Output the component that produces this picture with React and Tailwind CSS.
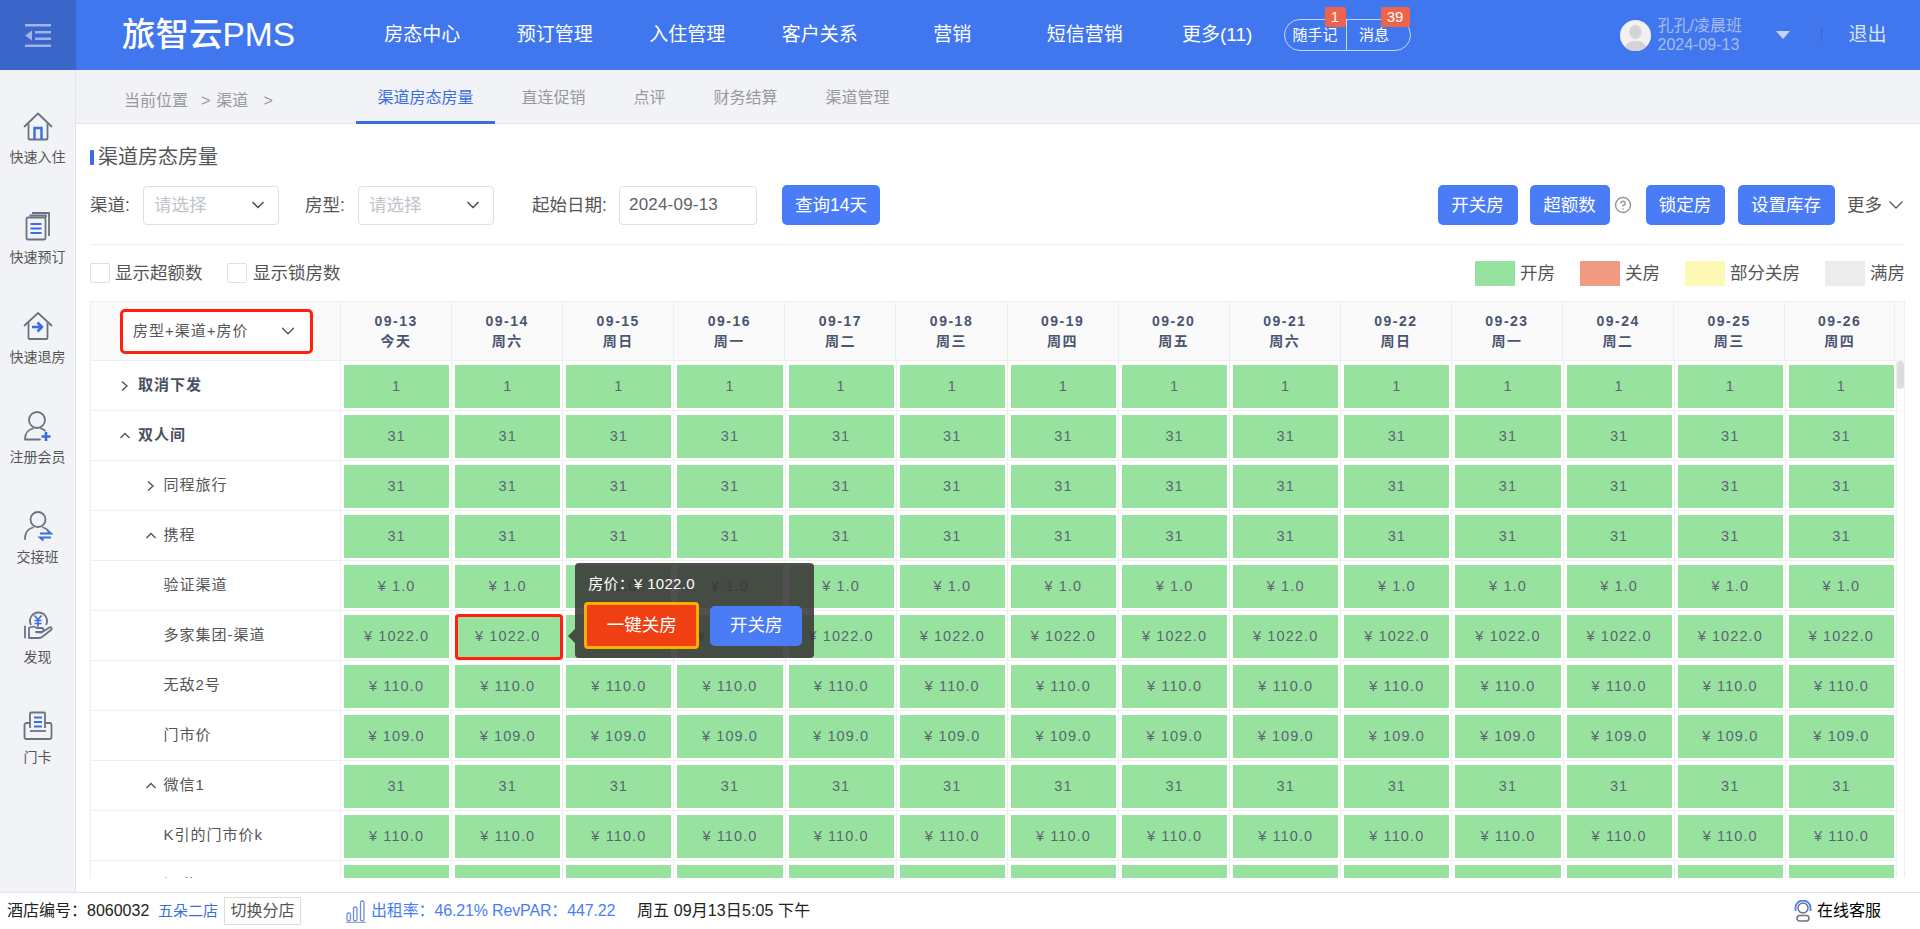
import React from "react";
import { ChevronDown, CircleHelp } from "lucide-react";

const navItems = ["房态中心", "预订管理", "入住管理", "客户关系", "营销", "短信营销", "更多(11)"];
const tabs = ["直连促销", "点评", "财务结算", "渠道管理"];
const days = [
  ["09-13", "今天"],
  ["09-14", "周六"],
  ["09-15", "周日"],
  ["09-16", "周一"],
  ["09-17", "周二"],
  ["09-18", "周三"],
  ["09-19", "周四"],
  ["09-20", "周五"],
  ["09-21", "周六"],
  ["09-22", "周日"],
  ["09-23", "周一"],
  ["09-24", "周二"],
  ["09-25", "周三"],
  ["09-26", "周四"],
];
const rows = [
  { label: "取消下发", level: 0, open: false, value: "1" },
  { label: "双人间", level: 0, open: true, value: "31" },
  { label: "同程旅行", level: 1, open: false, value: "31" },
  { label: "携程", level: 1, open: true, value: "31" },
  { label: "验证渠道", level: 2, value: "¥ 1.0" },
  { label: "多家集团-渠道", level: 2, value: "¥ 1022.0", popover: true },
  { label: "无敌2号", level: 2, value: "¥ 110.0" },
  { label: "门市价", level: 2, value: "¥ 109.0" },
  { label: "微信1", level: 1, open: true, value: "31" },
  { label: "K引的门市价k", level: 2, value: "¥ 110.0" },
  { label: "渠道价", level: 2, value: "¥ 110.0" },
];

const HomeIcon = () => (
  <svg width="30" height="30" viewBox="0 0 30 30" fill="none" stroke="#6b7280" strokeWidth="1.8">
    <path d="M1.5 15.5 15 2.5l13.5 13" strokeLinejoin="round" strokeLinecap="round" />
    <path d="M5.5 12.5V27.5a1 1 0 0 0 1 1h17a1 1 0 0 0 1-1V12.5" />
    <path d="M11.5 28V17h7v11" stroke="#3a6ee0" strokeWidth="2.4" />
  </svg>
);

const BookIcon = () => (
  <svg width="30" height="30" viewBox="0 0 30 30" fill="none" stroke="#6b7280" strokeWidth="1.8">
    <path d="M9 2h17v23" />
    <path d="M6.5 4.5h16.5v2" />
    <rect x="3.5" y="6.5" width="19" height="22" rx="1.5" />
    <path d="M7.5 13h11M7.5 17.5h11M7.5 22h11" stroke="#3a6ee0" strokeWidth="2.2" />
  </svg>
);

const CheckoutIcon = () => (
  <svg width="30" height="30" viewBox="0 0 30 30" fill="none" stroke="#6b7280" strokeWidth="1.8">
    <path d="M1.5 14.5 15 2l13.5 12.5" strokeLinejoin="round" strokeLinecap="round" />
    <path d="M5.5 11.5V27a1 1 0 0 0 1 1h17a1 1 0 0 0 1-1V11.5" />
    <path d="M9 16h9M14.5 11.5 19 16l-4.5 4.5" stroke="#3a6ee0" strokeWidth="2.6" strokeLinejoin="round" />
  </svg>
);

const MemberIcon = () => (
  <svg width="30" height="30" viewBox="0 0 30 30" fill="none" stroke="#6b7280" strokeWidth="1.8">
    <circle cx="14" cy="9" r="8" />
    <path d="M2 28c0-6 4-9.500 8-10.500M18 17.500c1.500.5 3 1.200 4 2.200M2 28.500h15" strokeLinecap="round" />
    <path d="M23 21v9M18.500 25.500h9" stroke="#3a6ee0" strokeWidth="2.6" />
  </svg>
);

const ShiftIcon = () => (
  <svg width="30" height="30" viewBox="0 0 30 30" fill="none" stroke="#6b7280" strokeWidth="1.8">
    <circle cx="15" cy="8.500" r="7.500" />
    <path d="M2 28c0-7 4-10.500 8-11.500M20 16.500c1.500.4 3 1.200 4.500 2.500" strokeLinecap="round" />
    <path d="M17 22.500h11l-3.500-3M28 26.500H17l3.500 3" stroke="#3a6ee0" strokeWidth="2" />
  </svg>
);

const DiscoverIcon = () => (
  <svg width="30" height="30" viewBox="0 0 30 30" fill="none" stroke="#6b7280" strokeWidth="1.8">
    <path d="M8 14A8.500 8.500 0 1 1 23 14" />
    <path d="M11.500 4.500 15 8.500l3.500-4M15 8.500v7M11.500 9.500h7M11.500 12.500h7" stroke="#3a6ee0" strokeWidth="1.7" />
    <path d="M2 15.500v11" strokeLinecap="round" />
    <path d="M6 17c3-2 6-1.500 8 0h4.500a2 2 0 0 1 0 4H13l5.500.5 8-5c1.800-1 3 1.200 1.500 2.500l-9 7c-1 .8-2 1-3.500 1H6z" strokeLinejoin="round" />
  </svg>
);

const DoorCardIcon = () => (
  <svg width="30" height="30" viewBox="0 0 30 30" fill="none" stroke="#6b7280" strokeWidth="1.8">
    <path d="M7 17V2.500a1 1 0 0 1 1-1h13a1 1 0 0 1 1 1V17" />
    <path d="M7 12H3.500a2 2 0 0 0-2 2v12a2 2 0 0 0 2 2h23a2 2 0 0 0 2-2V14a2 2 0 0 0-2-2H22" />
    <path d="M7 20h16" />
    <path d="M11 6.500h8M11 11h8M11 15.500h8" stroke="#3a6ee0" strokeWidth="2" />
  </svg>
);

const sideItems = [
  { label: "快速入住", Icon: HomeIcon },
  { label: "快速预订", Icon: BookIcon },
  { label: "快速退房", Icon: CheckoutIcon },
  { label: "注册会员", Icon: MemberIcon },
  { label: "交接班", Icon: ShiftIcon },
  { label: "发现", Icon: DiscoverIcon },
  { label: "门卡", Icon: DoorCardIcon },
];

const Header = () => (
  <header className="flex h-[70px] shrink-0 items-center bg-[#4177ee] text-white">
    <div className="flex h-full w-[76px] items-center justify-center bg-[#3a66c9]">
      <svg width="26" height="23" viewBox="0 0 26 23" fill="#9fb4e8">
        <rect x="0" y="0" width="26" height="2.500" />
        <rect x="10" y="7" width="16" height="2.500" />
        <rect x="10" y="13.500" width="16" height="2.500" />
        <rect x="0" y="20.500" width="26" height="2.500" />
        <path d="M0 11.500 7 6.500v10z" />
      </svg>
    </div>
    <div className="w-[280px] pl-[46px] text-[33.500px] font-medium leading-none">旅智云PMS</div>
    <nav className="flex">
      {navItems.map((item) => (
        <div key={item} className="w-[132.500px] text-center text-[19px]">
          {item}
        </div>
      ))}
    </nav>
    <div className="relative flex h-[32px] w-[127px] items-center rounded-full border border-[#c5d4f7] text-[15px]">
      <div className="flex h-full w-[62px] items-center justify-center border-r border-[#c5d4f7]">随手记</div>
      <div className="flex flex-1 items-center justify-center pr-[8px]">消息</div>
      <span className="absolute left-[40px] top-[-13px] flex h-[20px] w-[21px] items-center justify-center rounded-[2px] bg-[#f0634b] text-[15px]">
        1
      </span>
      <span className="absolute left-[96px] top-[-13px] flex h-[20px] w-[29px] items-center justify-center rounded-[2px] bg-[#f0634b] text-[15px]">
        39
      </span>
    </div>
    <div className="ml-[209px] h-[31px] w-[31px] overflow-hidden rounded-full bg-[#f1f1f1]">
      <svg width="31" height="31" viewBox="0 0 31 31" fill="#d3d3d6">
        <ellipse cx="15.500" cy="12" rx="6" ry="7" />
        <path d="M4 31c0-7 5-10 11.500-10S27 24 27 31z" />
      </svg>
    </div>
    <div className="ml-[7px] w-[118px] text-[16px] leading-[19px] text-[#a6bcf0]">
      <div>孔孔/凌晨班</div>
      <div>2024-09-13</div>
    </div>
    <div className="h-0 w-0 border-x-[7px] border-t-[8px] border-x-transparent border-t-[#c6d4f5]" />
    <div className="ml-[31px] h-[14px] w-px bg-[#3a66c9]" />
    <div className="ml-[27px] text-[19px] text-[#dbe4fa]">退出</div>
  </header>
);

const Sidebar = () => (
  <aside className="w-[76px] shrink-0 border-r border-[#e3e4ea] bg-[#f2f3f7] pt-[41px]">
    {sideItems.map(({ label, Icon }) => (
      <div key={label} className="flex h-[100px] flex-col items-center">
        <Icon />
        <div className="mt-[6px] text-[14px] leading-[20px] text-[#555555]">{label}</div>
      </div>
    ))}
  </aside>
);

const SubNav = () => (
  <div className="flex h-[54px] shrink-0 border-b border-[#e3e4e8] bg-[#f2f3f7] text-[16px] text-[#999999]">
    <div className="flex w-[301.500px] items-center pl-[48px] pt-[8px]">
      <span>当前位置</span>
      <span className="ml-[13px]">&gt;</span>
      <span className="ml-[6px]">渠道</span>
      <span className="ml-[15px]">&gt;</span>
    </div>
    <div className="flex items-center gap-[48px] pt-[2px]">
      <div className="relative flex h-full items-center text-[#3a6ee0]">
        渠道房态房量
        <span className="absolute -bottom-px -left-[21.500px] -right-[21.500px] h-[3px] bg-[#3a6ee0]" />
      </div>
      {tabs.map((tab) => (
        <div key={tab}>{tab}</div>
      ))}
    </div>
  </div>
);

const Select = ({ width }) => (
  <div className={`flex h-[39px] items-center justify-between rounded-[4px] border border-[#dcdfe6] pl-[10px] pr-[10px] ${width}`}>
    <span className="text-[17.500px] text-[#c0c4cc]">请选择</span>
    <ChevronDown size={20} strokeWidth={2} color="#555555" />
  </div>
);

const BlueButton = ({ children, className }) => (
  <button className={`flex h-[40px] items-center justify-center rounded-[5px] bg-[#4a7df5] text-[17.500px] text-white ${className}`}>
    {children}
  </button>
);

const Toolbar = () => (
  <div className="mt-[16px] flex h-[40px] items-center text-[17.500px] text-[#555555]">
    <span className="w-[53px]">渠道:</span>
    <Select width="w-[136px]" />
    <span className="ml-[26px] w-[53px]">房型:</span>
    <Select width="w-[136px]" />
    <span className="ml-[38px] w-[87px]">起始日期:</span>
    <div className="flex h-[39px] w-[137.500px] items-center rounded-[4px] border border-[#dcdfe6] pl-[9px] text-[17px] tracking-[0.200px] text-[#606266]">
      2024-09-13
    </div>
    <BlueButton className="ml-[25.500px] w-[98px]">查询14天</BlueButton>
    <div className="-mr-[3px] ml-auto flex items-center">
      <BlueButton className="w-[80px]">开关房</BlueButton>
      <BlueButton className="ml-[12px] w-[80px]">超额数</BlueButton>
      <CircleHelp size={18} color="#999999" className="ml-[4px]" />
      <BlueButton className="ml-[14px] w-[79px]">锁定房</BlueButton>
      <BlueButton className="ml-[13px] w-[97px]">设置库存</BlueButton>
      <span className="ml-[12.500px]">更多</span>
      <ChevronDown size={24} strokeWidth={1.300} className="ml-[2px]" />
    </div>
  </div>
);

const Legend = ({ color, label, className }) => (
  <div className={`flex items-center ${className}`}>
    <span className={`h-[25px] w-[40px] ${color}`} />
    <span className="ml-[5px]">{label}</span>
  </div>
);

const Filters = () => (
  <div className="flex h-[56px] items-center text-[17.500px] text-[#555555]">
    <span className="h-[20px] w-[20px] rounded-[2px] border border-[#dcdfe6]" />
    <span className="ml-[5px] w-[112px]">显示超额数</span>
    <span className="h-[20px] w-[20px] rounded-[2px] border border-[#dcdfe6]" />
    <span className="ml-[6px]">显示锁房数</span>
    <div className="ml-auto flex items-center">
      <Legend color="bg-[#98e2a0]" label="开房" />
      <Legend color="bg-[#f09a82]" label="关房" className="ml-[25px]" />
      <Legend color="bg-[#fdf9b5]" label="部分关房" className="ml-[25px]" />
      <Legend color="bg-[#ececec]" label="满房" className="ml-[25px]" />
    </div>
  </div>
);

const Popover = () => (
  <>
    <div className="absolute left-[3px] top-[3px] z-10 h-[46px] w-[108px] rounded-[4px] border-[3.500px] border-[#ff2010]" />
    <div className="absolute left-[116px] top-[18px] z-20 h-0 w-0 border-y-[7px] border-r-[7px] border-y-transparent border-r-[#444c44]" />
    <div className="absolute left-[123px] top-[-48px] z-20 h-[95px] w-[239px] rounded-[4px] bg-[rgba(53,49,52,0.85)]">
      <div className="pl-[13px] pt-[11px] text-[15px] leading-[20px] tracking-[0.300px] text-white">房价：¥ 1022.0</div>
      <div className="mt-[8px] flex items-center pl-[9px]">
        <button className="h-[47px] w-[115px] rounded-[4px] border-[3.500px] border-[#fbb000] bg-[#ef3f13] text-[17.500px] text-white">
          一键关房
        </button>
        <button className="ml-[11px] h-[40px] w-[92px] rounded-[5px] bg-[#4a7df5] text-[17.500px] text-white">开关房</button>
      </div>
    </div>
  </>
);

const TreeArrow = ({ open }) => (
  <svg width="10" height="10" viewBox="0 0 10 10" fill="none" stroke="#555555" strokeWidth="1.400">
    <polyline points={open ? "0.500,7 5,2.500 9.500,7" : "2,0.500 7,5 2,9.500"} />
  </svg>
);

const LeftCell = ({ row }) => {
  const indent = row.level === 0 ? "pl-[29px]" : "pl-[54.500px]";
  const weight = row.level === 0 ? "font-bold text-[#4a5060]" : "text-[#555555]";
  return (
    <div className={`flex h-[50px] items-center border-b border-r border-[#eeeeee] text-[15px] tracking-[1px] ${indent} ${weight}`}>
      <span className="flex w-[18px] shrink-0 items-center">
        {row.open !== undefined && <TreeArrow open={row.open} />}
      </span>
      {row.label}
    </div>
  );
};

const RoomTable = () => (
  <div className="relative w-[1815px] border-l border-r border-t border-[#eeeeee]">
    <div className="grid h-[59px] grid-cols-[250px_repeat(13,111.100px)_110px_10px] bg-[#fafafa]">
      <div className="flex items-center border-b border-r border-[#eeeeee] pl-[29px]">
        <div className="flex h-[45px] w-[193px] items-center justify-between rounded-[5px] border-[3.500px] border-[#ff2010] bg-white pl-[10px] pr-[11px] text-[15px] tracking-[1px] text-[#555555]">
          房型+渠道+房价
          <ChevronDown size={22} strokeWidth={1.500} />
        </div>
      </div>
      {days.map(([date, day]) => (
        <div
          key={date}
          className="flex flex-col items-center justify-center border-b border-r border-[#eeeeee] text-[14px] font-bold leading-[20px] tracking-[1.500px] text-[#4a5570]"
        >
          <span>{date}</span>
          <span>{day}</span>
        </div>
      ))}
      <div className="border-b border-[#eeeeee]" />
    </div>
    <div className="relative h-[517px] overflow-hidden">
      {rows.map((row) => (
        <div key={row.label} className="grid grid-cols-[250px_repeat(14,111.150px)]">
          <LeftCell row={row} />
          {days.map(([date], i) => (
            <div key={date} className="relative h-[50px] border-b border-r border-[#eeeeee] pb-[2px] pl-[3px] pr-[2px] pt-[4px]">
              <div className="flex h-full items-center justify-center bg-[#98e2a0] text-[14.500px] tracking-[1.100px] text-[#5b6670]">
                {row.value}
              </div>
              {row.popover && i === 1 && <Popover />}
            </div>
          ))}
        </div>
      ))}
      <span className="absolute right-0 top-0 h-[28px] w-[7px] rounded-full bg-[#dcdcdc]" />
    </div>
  </div>
);

const Footer = () => (
  <footer className="flex h-[37px] shrink-0 items-center border-t border-[#e3e4ea] bg-white pl-[7px] text-[16px] text-[#222222]">
    <span className="w-[151px]">酒店编号：8060032</span>
    <span className="text-[15px] text-[#3a6ee0]">五朵二店</span>
    <span className="ml-[6px] flex h-[28px] w-[77px] items-center justify-center border border-[#dddddd] text-[#555555]">
      切换分店
    </span>
    <svg width="20" height="23" viewBox="0 0 20 23" fill="none" stroke="#6d8fe0" strokeWidth="1.300" className="ml-[45px]">
      <rect x="1" y="13" width="3.500" height="8" rx="1.700" />
      <rect x="7.500" y="7" width="3.500" height="14" rx="1.700" />
      <rect x="14.500" y="1" width="3.500" height="20" rx="1.700" />
      <path d="M0 22.500h20" stroke="#9aa3b5" />
    </svg>
    <span className="ml-[5px] w-[266px] tracking-[-0.150px] text-[#4a7df5]">出租率：46.21% RevPAR：447.22</span>
    <span className="tracking-[0.100px]">周五 09月13日5:05 下午</span>
    <svg width="18" height="22" viewBox="0 0 18 22" fill="none" stroke="#6b7280" strokeWidth="1.500" className="ml-auto">
      <circle cx="9" cy="8" r="5" />
      <rect x="3" y="15.500" width="12" height="5.500" rx="2.700" />
      <path d="M1.500 11V7.500a7.500 7 0 0 1 15 0V11" stroke="#4a7df5" strokeWidth="1.800" />
    </svg>
    <span className="ml-[5px] mr-[39px] text-black">在线客服</span>
  </footer>
);

const App = () => {
  return (
    <div className="flex h-[929px] w-full flex-col overflow-hidden bg-white font-['Liberation_Sans','Noto_Sans_CJK_SC',sans-serif]">
      <Header />
      <div className="flex min-h-0 flex-1">
        <Sidebar />
        <main className="flex min-w-0 flex-1 flex-col">
          <SubNav />
          <div className="pl-[14px] pr-[15px] pt-[21px]">
            <div className="flex h-[24px] items-center text-[20px] text-[#555555]">
              <span className="mr-[4px] h-[15px] w-[4px] rounded-[1px] bg-[#3a6ee0]" />
              渠道房态房量
            </div>
            <Toolbar />
            <div className="mt-[19px] h-px bg-[#ebeef5]" />
            <Filters />
            <RoomTable />
          </div>
        </main>
      </div>
      <Footer />
    </div>
  );
};

export default App;
